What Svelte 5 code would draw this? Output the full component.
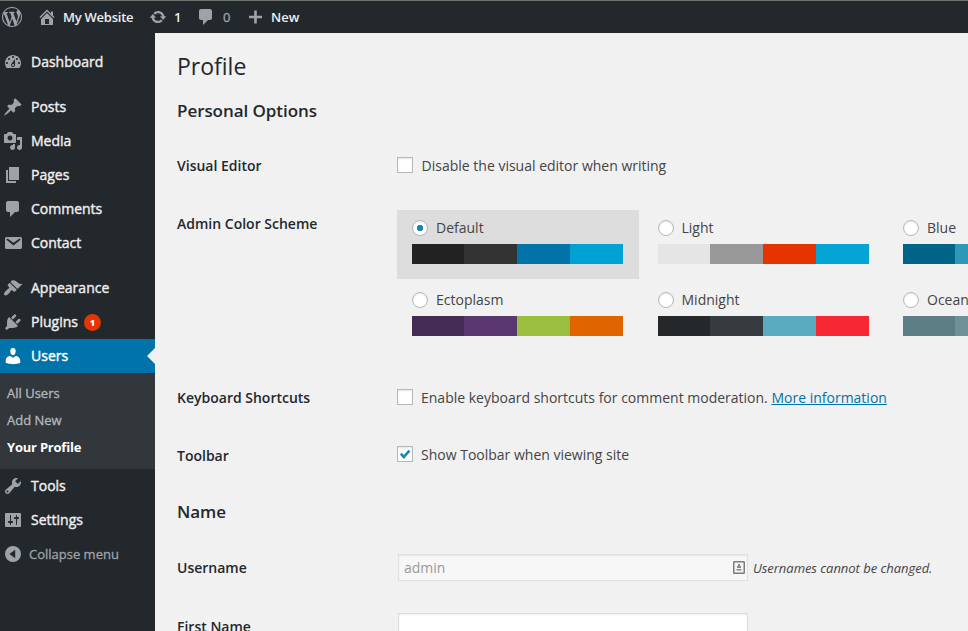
<script>
  const icons = {
    wordpress: 'M20 10c0-5.51-4.49-10-10-10C4.48 0 0 4.49 0 10c0 5.52 4.48 10 10 10 5.51 0 10-4.48 10-10zM7.78 15.37L4.37 6.22c.55-.02 1.17-.08 1.17-.08.5-.06.44-1.13-.06-1.11 0 0-1.45.11-2.37.11-.18 0-.37 0-.58-.01C4.12 2.69 6.87 1.11 10 1.11c2.33 0 4.45.87 6.05 2.34-.68-.11-1.65.39-1.65 1.58 0 .74.45 1.36.9 2.1.35.61.55 1.36.55 2.46 0 1.49-1.4 5-1.4 5l-3.03-8.37c.54-.02.82-.17.82-.17.5-.05.44-1.25-.06-1.22 0 0-1.44.12-2.38.12-.87 0-2.33-.12-2.33-.12-.5-.03-.56 1.2-.06 1.22l.92.08 1.26 3.41zM17.41 10c.24-.64.74-1.87.43-4.25.7 1.29 1.05 2.71 1.05 4.25 0 3.29-1.73 6.24-4.4 7.78.97-2.59 1.94-5.2 2.92-7.78zM6.1 18.09C3.12 16.65 1.11 13.53 1.11 10c0-1.3.23-2.48.72-3.59C3.25 10.3 4.67 14.2 6.1 18.09zm4.03-6.63l2.58 6.98c-.86.29-1.76.45-2.71.45-.79 0-1.57-.11-2.29-.33.81-2.38 1.62-4.74 2.42-7.1z',
    home: 'M16 8.5l1.53 1.53-1.06 1.06L10 4.6l-6.47 6.49-1.06-1.06L10 2.5l4 4v-2h2v4zm-6-2.46l6 5.99V18H4v-5.97zM12 17v-5H8v5h4z',
    update: 'M10.2 3.28c3.53 0 6.43 2.61 6.92 6h2.08l-3.5 4-3.5-4h2.32c-.45-1.97-2.21-3.45-4.32-3.45-1.45 0-2.73.71-3.54 1.78L4.95 5.66C6.23 4.2 8.11 3.28 10.2 3.28zm-.4 13.44c-3.52 0-6.43-2.61-6.92-6H.8l3.5-4c1.17 1.33 2.33 2.67 3.5 4H5.48c.45 1.97 2.21 3.45 4.32 3.45 1.45 0 2.73-.71 3.54-1.78l1.71 1.95c-1.28 1.46-3.15 2.38-5.25 2.38z',
    comments: 'M5 2h9c1.1 0 2 .9 2 2v7c0 1.1-.9 2-2 2h-2l-5 5v-5H5c-1.1 0-2-.9-2-2V4c0-1.1.9-2 2-2z',
    plus: 'M17 8.7v2.6h-5.2v5.2H9.2v-5.2H4V8.7h5.2V3.5h2.6v5.2z',
    dashboard: 'M3.76 16h12.48c1.1-1.37 1.76-3.11 1.76-5 0-4.42-3.58-8-8-8s-8 3.58-8 8c0 1.89.66 3.63 1.76 5zM10 4c.55 0 1 .45 1 1s-.45 1-1 1-1-.45-1-1 .45-1 1-1zM6 6c.55 0 1 .45 1 1s-.45 1-1 1-1-.45-1-1 .45-1 1-1zm8 0c.55 0 1 .45 1 1s-.45 1-1 1-1-.45-1-1 .45-1 1-1zm-5.37 5.55L12 7v6c0 1.1-.9 2-2 2s-2-.9-2-2c0-.57.24-1.08.63-1.45zM4 10c.55 0 1 .45 1 1s-.45 1-1 1-1-.45-1-1 .45-1 1-1zm12 0c.55 0 1 .45 1 1s-.45 1-1 1-1-.45-1-1 .45-1 1-1zm-5 3c0-.55-.45-1-1-1s-1 .45-1 1 .45 1 1 1 1-.45 1-1z',
    post: 'M10.44 3.02l1.82-1.82 6.36 6.35-1.83 1.82c-1.05-.68-2.48-.57-3.41.36l-.75.75c-.92.93-1.04 2.35-.35 3.41l-1.83 1.82-2.41-2.41-2.8 2.79c-.42.42-3.38 2.71-3.8 2.29s1.86-3.39 2.28-3.81l2.79-2.79L4.1 9.36l1.83-1.82c1.05.69 2.48.57 3.4-.36l.75-.75c.93-.92 1.05-2.35.36-3.41z',
    media: 'M13 11V4c0-.55-.45-1-1-1h-1.67L9 1H5L3.67 3H2c-.55 0-1 .45-1 1v7c0 .55.45 1 1 1h10c.55 0 1-.45 1-1zM7 4.5c1.38 0 2.5 1.12 2.5 2.5S8.38 9.5 7 9.5 4.5 8.38 4.5 7 5.62 4.5 7 4.5zM14 6h5v10.5c0 1.38-1.12 2.5-2.5 2.5S14 17.88 14 16.5s1.12-2.5 2.5-2.5c.17 0 .34.02.5.05V9h-3V6zm-4 8.05V13h2v3.5c0 1.38-1.12 2.5-2.5 2.5S7 17.88 7 16.5 8.12 14 9.5 14c.17 0 .34.02.5.05z',
    page: 'M6 15V2h10v13H6zm-1 1h8v2H3V5h2v11z',
    email: 'M3.87 4h13.25C18.37 4 19 4.59 19 5.79v8.42c0 1.19-.63 1.79-1.88 1.79H3.87c-1.25 0-1.88-.6-1.88-1.79V5.79c0-1.2.63-1.79 1.88-1.79zm6.62 8.6l6.74-5.53c.24-.2.43-.66.13-1.07-.29-.41-.82-.42-1.17-.17l-5.7 3.86L4.8 5.83c-.35-.25-.88-.24-1.17.17-.3.41-.11.87.13 1.07z',
    appearance: 'M14.48 11.06L7.41 3.99l1.5-1.5c.5-.56 2.3-.47 3.51.32 1.21.8 1.43 1.28 2.91 2.1 1.18.64 2.45 1.26 4.45.85zm-.71.71L6.7 4.7 4.93 6.47c-.39.39-.39 1.02 0 1.41l1.06 1.06c.39.39.39 1.03 0 1.42-.6.6-1.43 1.11-2.21 1.69-.35.26-.7.53-1.01.84C1.43 14.23.4 16.08 1.4 17.07c.99 1 2.84-.03 4.18-1.36.31-.31.58-.66.85-1.02.57-.78 1.08-1.61 1.69-2.21.39-.39 1.02-.39 1.41 0l1.06 1.06c.39.39 1.02.39 1.41 0z',
    plugins: 'M13.11 4.36L9.87 7.6 8 5.73l3.24-3.24c.35-.34 1.05-.2 1.56.32.52.51.66 1.21.31 1.55zm-8 1.77l.91-1.12 9.01 9.01-1.19.84c-.71.71-2.63 1.16-3.82 1.16H6.14L4.9 17.26c-.59.59-1.54.59-2.12 0-.59-.58-.59-1.53 0-2.12l1.24-1.24v-3.88c0-1.13.4-3.19 1.09-3.89zm7.26 3.97l3.24-3.24c.34-.35 1.04-.21 1.55.31.52.51.66 1.21.31 1.55l-3.24 3.25z',
    users: 'M10 9.25c-2.27 0-2.73-3.44-2.73-3.44C7 4.02 7.82 2 9.97 2c2.16 0 2.98 2.02 2.71 3.81 0 0-.41 3.44-2.68 3.44zm0 2.57L12.72 10c2.39 0 4.52 2.33 4.52 4.53v2.49s-3.65 1.13-7.24 1.13c-3.65 0-7.24-1.13-7.24-1.13v-2.49c0-2.25 1.94-4.48 4.47-4.48z',
    tools: 'M16.68 9.77c-1.34 1.34-3.3 1.67-4.95.99l-5.41 6.52c-.99.99-2.59.99-3.58 0s-.99-2.59 0-3.57l6.52-5.42c-.68-1.65-.35-3.61.99-4.95 1.28-1.28 3.12-1.62 4.72-1.06l-2.89 2.89 2.82 2.82 2.86-2.87c.53 1.58.18 3.39-1.08 4.65zM3.81 16.21c.4.39 1.04.39 1.43 0 .4-.4.4-1.04 0-1.43-.39-.4-1.03-.4-1.43 0-.39.39-.39 1.03 0 1.43z',
    settings: 'M18 16V4c0-.55-.45-1-1-1H3c-.55 0-1 .45-1 1v12c0 .55.45 1 1 1h14c.55 0 1-.45 1-1zM8 11h1c.55 0 1 .45 1 1s-.45 1-1 1H8v1.5c0 .28-.22.5-.5.5s-.5-.22-.5-.5V13H6c-.55 0-1-.45-1-1s.45-1 1-1h1V5.5c0-.28.22-.5.5-.5s.5.22.5.5V11zm5-2h-1c-.55 0-1-.45-1-1s.45-1 1-1h1V5.5c0-.28.22-.5.5-.5s.5.22.5.5V7h1c.55 0 1 .45 1 1s-.45 1-1 1h-1v5.5c0 .28-.22.5-.5.5s-.5-.22-.5-.5V9z',
    collapse: 'M10 2a8 8 0 1 0 0 16a8 8 0 0 0 0-16zM12.2 5.8v8.4L6.4 10z'
  };

  const groups = [
    [{ label: 'Dashboard', icon: 'dashboard' }],
    [
      { label: 'Posts', icon: 'post' },
      { label: 'Media', icon: 'media' },
      { label: 'Pages', icon: 'page' },
      { label: 'Comments', icon: 'comments' },
      { label: 'Contact', icon: 'email' }
    ],
    [
      { label: 'Appearance', icon: 'appearance' },
      { label: 'Plugins', icon: 'plugins', badge: 1 },
      { label: 'Users', icon: 'users', current: true, children: ['All Users', 'Add New', 'Your Profile'] },
      { label: 'Tools', icon: 'tools' },
      { label: 'Settings', icon: 'settings' },
      { label: 'Collapse menu', icon: 'collapse', muted: true }
    ]
  ];

  const schemes = [
    { name: 'Default', colors: ['#222222', '#333333', '#0074a8', '#00a2d3'] },
    { name: 'Light', colors: ['#e5e5e5', '#999999', '#e53400', '#04a4d4'] },
    { name: 'Blue', colors: ['#006488', '#2d98b8', '#e1a948', '#74b6ce'] },
    { name: 'Ectoplasm', colors: ['#442b54', '#59386f', '#9abf3f', '#e06500'] },
    { name: 'Midnight', colors: ['#25282b', '#363b3f', '#59abbf', '#f52833'] },
    { name: 'Ocean', colors: ['#5c7e84', '#6e9198', '#9ebaa0', '#aa9d88'] }
  ];
  let scheme = $state('Default');
</script>

{#snippet icon(name, size = 20)}
  <svg class="icon" width={size} height={size} viewBox="0 0 20 20" aria-hidden="true">
    <path fill-rule="evenodd" d={icons[name]} />
  </svg>
{/snippet}

<div class="admin">
  <header class="bar">
    <span class="logo">{@render icon('wordpress')}</span>
    <span class="site">{@render icon('home')}<b>My Website</b></span>
    <span class="updates">{@render icon('update', 18)}<b>1</b></span>
    <span class="replies">{@render icon('comments')}<b class="dim">0</b></span>
    <span class="new">{@render icon('plus')}<b>New</b></span>
  </header>
  <div class="body">
    <nav>
      {#each groups as group}
        <ul>
          {#each group as item}
            <li>
              <a class="item" class:current={item.current} class:muted={item.muted} href="#top">
                {@render icon(item.icon)}
                <span class="label">{item.label}</span>
                {#if item.badge}<span class="badge">{item.badge}</span>{/if}
              </a>
              {#if item.children}
                <ul class="sub">
                  {#each item.children as child, i}
                    <li class:on={i === 2}>{child}</li>
                  {/each}
                </ul>
              {/if}
            </li>
          {/each}
        </ul>
      {/each}
    </nav>
    <main>
      <h1>Profile</h1>
      <h2>Personal Options</h2>
      <div class="row visual">
        <span class="th">Visual Editor</span>
        <label class="check"><span class="box"></span><span class="t1">Disable the visual editor when writing</span></label>
      </div>
      <div class="row scheme">
        <span class="th">Admin Color Scheme</span>
        <div class="schemes">
          {#each schemes as s}
            <button class="option" class:selected={scheme === s.name} onclick={() => (scheme = s.name)}>
              <span class="pick"><span class="radio"></span><span>{s.name}</span></span>
              <span class="palette">
                {#each s.colors as c}<i style:background={c}></i>{/each}
              </span>
            </button>
          {/each}
        </div>
      </div>
      <div class="row keys">
        <span class="th">Keyboard Shortcuts</span>
        <label class="check"><span class="box"></span><span>Enable keyboard shortcuts for comment moderation. <a href="#more">More information</a></span></label>
      </div>
      <div class="row tool">
        <span class="th">Toolbar</span>
        <label class="check">
          <span class="box">
            <svg width="14" height="14" viewBox="0 0 14 14"><path d="M2.9 6.7l2.9 3.3L11.4 3.6" fill="none" stroke="#1487bd" stroke-width="2.6" /></svg>
          </span>
          <span>Show Toolbar when viewing site</span>
        </label>
      </div>
      <h2 class="name">Name</h2>
      <div class="row user">
        <span class="th">Username</span>
        <div class="field disabled">
          <span>admin</span>
          <svg width="12" height="13" viewBox="0 0 12 13">
            <rect x=".75" y=".75" width="10.5" height="11.5" rx=".6" fill="#f4f4f4" stroke="#7d7d7d" stroke-width="1.5" />
            <path d="M5 3h2v2h1v2H4V5h1zM3.5 8h5v1.5h-5z" fill="#8a8a8a" />
          </svg>
        </div>
        <em>Usernames cannot be changed.</em>
      </div>
      <div class="row first">
        <span class="th">First Name</span>
        <div class="field"></div>
      </div>
    </main>
  </div>
</div>

<style>
  :global(body) { margin: 0; overflow: hidden; }
  * { box-sizing: border-box; }
  .admin {
    width: 968px; height: 631px; overflow: hidden;
    display: flex; flex-direction: column;
    font: 14px/20px 'Open Sans', sans-serif; color: #444; background: #f1f1f1;
  }
  .bar {
    flex: none; height: 33px; display: flex; align-items: center;
    background: #23282d; border-top: 1px solid #6f7471; color: #eee; padding-left: 2px;
  }
  .bar > span { display: flex; align-items: center; flex: none; white-space: nowrap; }
  .bar b { font-size: 13px; font-weight: 600; letter-spacing: -.25px; }
  .bar .dim { color: #9ea3a8; font-weight: 400; -webkit-text-stroke: .3px; }
  .icon { display: block; flex: none; fill: #9ea3a8; }
  .site { margin-left: 15px; gap: 6px; width: 112px; }
  .updates { width: 47px; gap: 7px; }
  .replies { width: 49px; gap: 7px; }
  .new { gap: 6px; }
  .new b { letter-spacing: 0; }
  .body { flex: 1; min-height: 0; display: flex; }
  nav { width: 155px; flex: none; background: #23282d; padding-top: 12px; }
  ul { list-style: none; margin: 0 0 11px; padding: 0; }
  .item {
    position: relative; display: flex; align-items: center; height: 34px; padding-left: 3px;
    color: #eee; text-decoration: none; white-space: nowrap;
  }
  .label { margin-left: 8px; -webkit-text-stroke: .4px; }
  .badge {
    width: 17px; height: 17px; border-radius: 50%; background: #e53500; color: #fff;
    font-size: 9px; font-weight: 800; line-height: 17px; text-align: center; margin: 1px 0 0 6px;
  }
  .current { background: #0073aa; color: #fff; }
  .current .icon { fill: #fff; }
  .current::after {
    content: ''; position: absolute; right: 0; top: 9px;
    border: 8px solid transparent; border-left-width: 0; border-right-color: #f1f1f1;
  }
  .muted { color: #9ea3a8; font-size: 13px; }
  .muted .label { margin-left: 6px; -webkit-text-stroke: .3px; }
  .sub { margin: 0; background: #32373c; height: 96px; padding: 7px 0 0 7px; color: #b4b9be; font-size: 13px; -webkit-text-stroke: .3px; }
  .sub li { height: 27px; line-height: 27px; }
  .sub .on { color: #fff; font-weight: 700; letter-spacing: -.22px; -webkit-text-stroke: 0; }

  main { flex: none; width: 813px; padding-left: 22px; overflow: hidden; }
  h1 { margin: 18px 0 0; font-size: 23px; line-height: 31px; font-weight: 400; color: #23282d; }
  h2 { margin: 16px 0 0; font-size: 17px; line-height: 26px; font-weight: 600; color: #23282d; letter-spacing: -.06px; }
  .row { display: flex; white-space: nowrap; }
  .th { width: 220px; flex: none; font-weight: 600; color: #23282d; }
  .visual { margin-top: 32px; height: 54px; }
  .t1 { margin-left: .6px; }
  .scheme { height: 178px; }
  .scheme .th { padding-top: 4px; }
  .keys { height: 57px; }
  .tool .th { padding-top: 1px; }
  .check { display: flex; height: 20px; align-items: center; }
  .box { width: 16px; height: 16px; border: 1px solid #b4b9be; background: #fff; margin: -2px 8px 0 0; flex: none; box-shadow: inset 0 1px 2px rgba(0,0,0,.1); }
  .box svg { display: block; }
  .schemes { flex: none; width: 740px; display: flex; flex-wrap: wrap; align-content: flex-start; gap: 3px; }
  .option {
    width: 242.5px; height: 69px; border: 0; background: none; padding: 8px 15px 15px;
    font: inherit; color: inherit; text-align: left; display: flex; flex-direction: column;
  }
  .selected { background: #ddd; width: 242px; margin-right: .5px; }
  .pick { display: flex; align-items: center; height: 20px; }
  .radio { width: 16px; height: 16px; border-radius: 50%; border: 1px solid #b4b9be; background: #fff; margin-right: 8px; flex: none; box-shadow: inset 0 1px 2px rgba(0,0,0,.1); }
  .selected .radio { background: radial-gradient(circle, #1487bd 2.9px, #fff 3.5px); }
  .palette { display: flex; width: 211px; height: 20px; margin-top: 6px; }
  .palette i { width: 53px; }
  .palette i:first-child { width: 52px; }
  a { color: #0073aa; }
  .name { margin-top: 34px; }
  .tool { height: 20px; }
  .user { margin-top: 29px; height: 59px; }
  .user .th { padding-top: 4px; }
  .first .th { padding-top: 4px; }
  .field { flex: none; margin-left: 1px; width: 350px; height: 27px; border: 1px solid #ddd; background: #fff; box-shadow: inset 0 1px 2px rgba(0,0,0,.07); }
  .disabled { display: flex; align-items: center; justify-content: space-between; background: #f7f7f7; border-color: #e1e1e1; color: #999; padding: 0 2px 0 5px; }
  em { font-size: 13px; margin: 4px 0 0 5px; letter-spacing: -.04px; }
</style>
